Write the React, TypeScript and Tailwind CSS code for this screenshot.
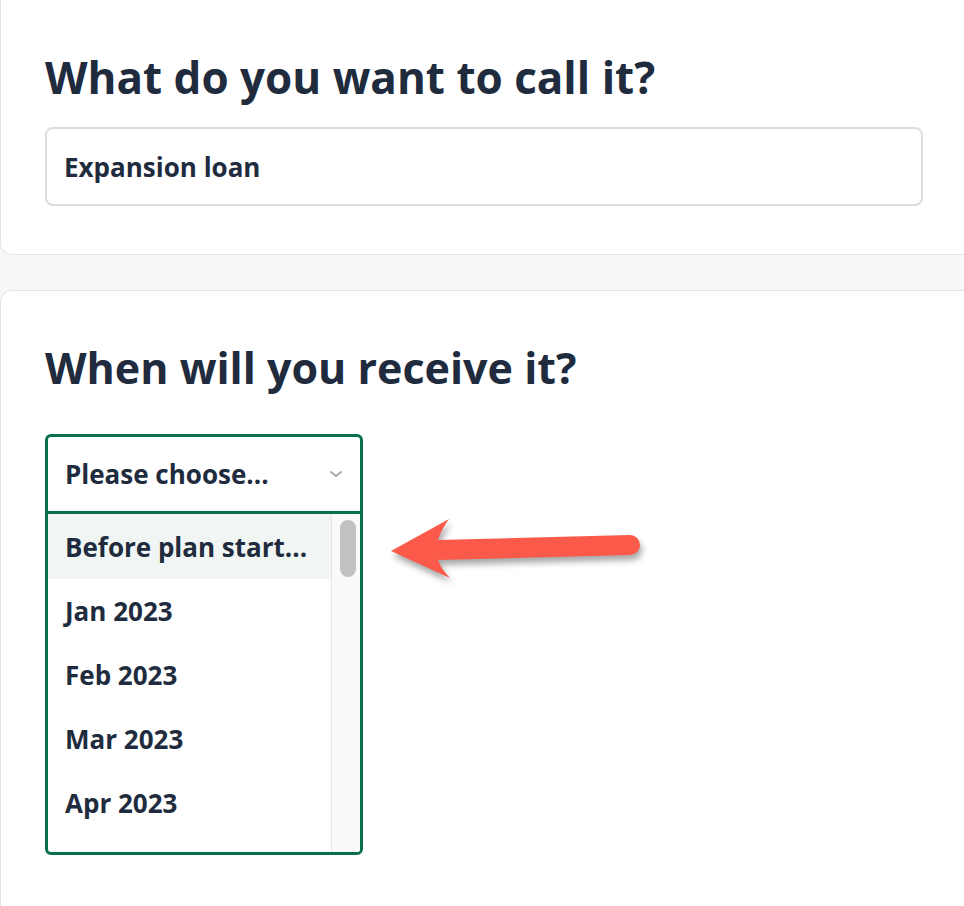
const months = ['Jan 2023', 'Feb 2023', 'Mar 2023', 'Apr 2023'];

function Chevron() {
  return (
    <svg width="14" height="8" viewBox="0 0 14 8" fill="none">
      <path d="M2 2l5 4 5-4" stroke="#a3a8ad" strokeWidth="2" strokeLinecap="round" strokeLinejoin="round" />
    </svg>
  );
}

function Arrow() {
  return (
    <svg
      width="280"
      height="90"
      viewBox="0 0 280 90"
      className="drop-shadow-[2px_5px_3px_rgba(0,0,0,0.35)]"
    >
      <path
        d="M10 45 L68 13 Q60 24 57 34 L249 29 A10 10 0 0 1 249 49 L57 54 Q60 63 69 72 Z"
        fill="#fb5a4b"
      />
    </svg>
  );
}

export default function App() {
  return (
    <div className="min-h-screen overflow-hidden bg-[#f7f8f8] font-['Open_Sans',sans-serif] text-[#202b3e]">
      {/* Name card */}
      <section className="-mt-6 -mr-6 rounded-xl border border-[#e3e4e4] bg-white pl-[44px] pr-[64px] pt-[74px] pb-[48px]">
        <h2 className="text-[44px] font-bold leading-[53px]">What do you want to call it?</h2>
        <div className="mt-[23px] flex h-[79px] items-center rounded-lg border-2 border-[#dcdde0] px-[17px] text-[26px] leading-none font-bold">
          Expansion loan
        </div>
      </section>

      {/* Date card */}
      <section className="relative mt-[35px] -mr-6 min-h-[640px] rounded-t-xl border border-b-0 border-[#e3e4e4] bg-white px-[44px] pt-[50px]">
        <h2 className="text-[43px] font-bold leading-[53px]">When will you receive it?</h2>

        <div className="mt-[40px] w-[318px] overflow-hidden rounded-md border-[3px] border-[#07704f]">
          <div className="flex h-[77px] items-center justify-between border-b-[3px] border-[#07704f] px-[17px] text-[26px] leading-none font-bold">
            <span>Please choose...</span>
            <Chevron />
          </div>
          <div className="flex h-[338px]">
            <ul className="flex-1 text-[26px] leading-none font-bold">
              <li className="flex h-[65px] items-center bg-[#f1f6f5] pl-[17px] whitespace-nowrap">Before plan start...</li>
              {months.map((m) => (
                <li key={m} className="flex h-[64px] items-center pl-[17px]">
                  {m}
                </li>
              ))}
            </ul>
            <div className="w-[29px] border-l border-[#e6e6e6] bg-[#fafafa] pt-[6px] pl-[8px]">
              <div className="h-[57px] w-[16px] rounded-full bg-[#c1c1c1]" />
            </div>
          </div>
        </div>

        <div className="absolute top-[215px] left-[380px]">
          <Arrow />
        </div>
      </section>
    </div>
  );
}
